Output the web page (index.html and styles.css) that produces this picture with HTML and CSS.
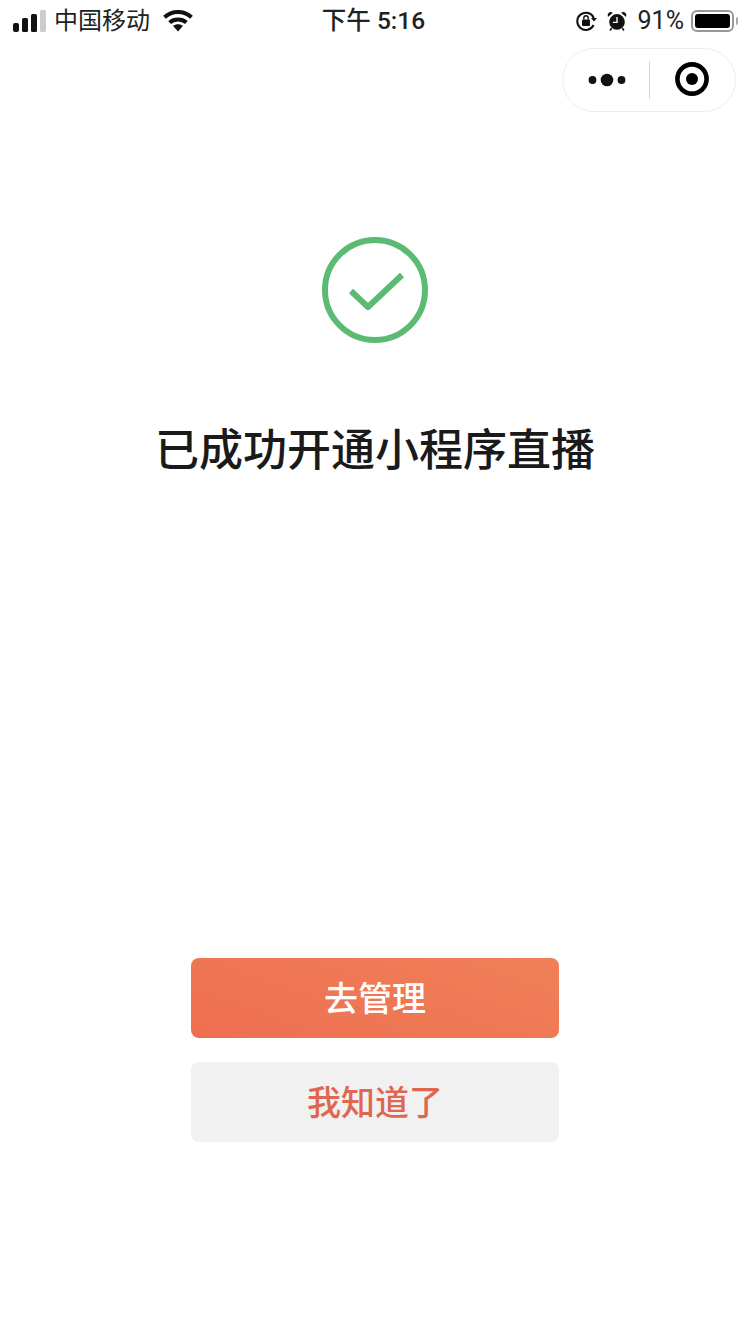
FILE: index.html
```html
<!DOCTYPE html>
<html lang="zh-CN">
<head>
    <meta charset="UTF-8">
    <meta name="viewport" content="width=device-width, initial-scale=1.0">
    <title>已成功开通小程序直播</title>
    <link rel="stylesheet" href="styles.css">
</head>
<body>
<div id="page">
    <div id="status-bar">
        <div class="status-side">
            <svg class="signal" width="34" height="22" viewBox="0 0 34 22">
                <rect x="0" y="13" width="6" height="9" rx="2" fill="#111"/>
                <rect x="9" y="8" width="6" height="14" rx="1.5" fill="#111"/>
                <rect x="18" y="4" width="6" height="18" rx="1.5" fill="#111"/>
                <rect x="27" y="0" width="6" height="22" rx="1.5" fill="#ccc"/>
            </svg>
            <span class="carrier">中国移动</span>
            <svg class="wifi" width="30" height="22" viewBox="0 0 30 22">
                <path d="M1.5 7.2C9 .2 21 .2 28.5 7.2" fill="none" stroke="#111" stroke-width="4"/>
                <path d="M6.6 12.4c4.6-4 12.2-4 16.8 0" fill="none" stroke="#111" stroke-width="4"/>
                <path d="M10 15.8c3-2.2 7-2.2 10 0L15 21.5z" fill="#111"/>
            </svg>
        </div>
        <div class="status-time">下午 5:16</div>
        <div class="status-side status-right">
            <svg class="lock" width="22" height="22" viewBox="0 0 22 22">
                <path d="M18.8 8A8.6 8.6 0 1 0 18.6 15" fill="none" stroke="#111" stroke-width="2"/>
                <path d="M16 8h6l-3 3.6z" fill="#111"/>
                <rect x="7" y="9.5" width="8" height="6.5" rx="1" fill="#111"/>
                <path d="M8.8 9.5V8a2.2 2.2 0 0 1 4.4 0v1.5" fill="none" stroke="#111" stroke-width="1.4"/>
            </svg>
            <svg class="alarm" width="20" height="20" viewBox="0 0 22 22">
                <circle cx="11" cy="12" r="8.6" fill="#111"/>
                <path d="M11 6.5v6H6.5" fill="none" stroke="#fff" stroke-width="1.5"/>
                <path d="M1 6.5 6.5 1.8 3.4.8.8 3.4zM21 6.5 15.5 1.8l3.1-1 2.6 2.6z" fill="#111"/>
                <path d="M5 19l-1.6 2.4M17 19l1.6 2.4" stroke="#111" stroke-width="1.8"/>
            </svg>
            <span class="battery-text">91%</span>
            <div class="battery">
                <div class="battery-fill"></div>
            </div>
            <div class="battery-cap"></div>
        </div>
    </div>

    <div id="nav-row">
        <div class="capsule">
            <div class="capsule-part">
                <svg class="dots" width="40" height="16" viewBox="0 0 40 16">
                    <circle cx="4.5" cy="8" r="3.9" fill="#111"/>
                    <circle cx="19" cy="8" r="6.3" fill="#111"/>
                    <circle cx="33.5" cy="8" r="3.9" fill="#111"/>
                </svg>
            </div>
            <div class="capsule-line"></div>
            <div class="capsule-part">
                <svg class="target" width="36" height="36" viewBox="0 0 36 36">
                    <circle cx="18" cy="18" r="14.6" fill="none" stroke="#000" stroke-width="4.6"/>
                    <circle cx="18" cy="18" r="6" fill="#000"/>
                </svg>
            </div>
        </div>
    </div>

    <div id="result">
        <svg class="result-icon" width="108" height="108" viewBox="0 0 108 108">
            <circle cx="54" cy="54" r="50" fill="none" stroke="#5bbb73" stroke-width="6"/>
            <path d="M30 55 47 71 81 39" fill="none" stroke="#5bbb73" stroke-width="6" stroke-linejoin="round"/>
        </svg>
        <h1 class="result-title">已成功开通小程序直播</h1>
    </div>

    <div id="actions">
        <button class="btn btn-primary">去管理</button>
        <button class="btn btn-default">我知道了</button>
    </div>
</div>
</body>
</html>
```

FILE: styles.css
```css
html, body {
    margin: 0;
    padding: 0;
    background-color: #ffffff;
}
#page {
    width: 750px;
    height: 1334px;
    overflow: hidden;
    font-family: Roboto, "Noto Sans CJK SC", sans-serif;
    color: #111;
    display: flex;
    flex-direction: column;
}
#status-bar {
    height: 42px;
    display: flex;
    align-items: center;
    justify-content: space-between;
    padding: 0 12px 0 13px;
    font-size: 24px;
}
.status-side {
    width: 230px;
    display: flex;
    align-items: center;
    line-height: 38px;
    height: 38px;
}
.status-right {
    justify-content: flex-end;
    gap: 9px;
}
.carrier {
    margin-left: 7px;
    color: #222;
}
.wifi {
    margin-left: 13px;
}
.lock {
    margin-right: 1px;
}
.status-time {
    color: #222;
    font-size: 24.5px;
    font-weight: 500;
    line-height: 38px;
    height: 38px;
    margin-right: 4px;
}
.battery-text {
    color: #222;
    font-size: 25px;
    margin-left: 2px;
}
.battery {
    box-sizing: border-box;
    width: 43px;
    height: 22px;
    border: 2px solid #999;
    border-radius: 6px;
    padding: 2px;
    margin-left: -2px;
}
.battery-fill {
    width: 35px;
    height: 14px;
    background-color: #000;
    border-radius: 3px;
}
.battery-cap {
    width: 2px;
    height: 8px;
    background-color: #aaa;
    margin-left: -7px;
    border-radius: 0 2px 2px 0;
}
#nav-row {
    display: flex;
    justify-content: flex-end;
    padding: 6px 14px 0 0;
}
.capsule {
    box-sizing: border-box;
    width: 174px;
    height: 64px;
    border: 1px solid #eeeeee;
    border-radius: 32px;
    display: flex;
    align-items: center;
}
.capsule-part {
    flex: 1;
    display: flex;
    align-items: center;
    justify-content: center;
}
.capsule-line {
    width: 1px;
    height: 38px;
    background-color: #d8d8d8;
}
.dots {
    margin-left: 4px;
}
.target {
    margin-top: -2px;
}
#result {
    display: flex;
    flex-direction: column;
    align-items: center;
    padding-top: 124px;
}
.result-icon {
    display: block;
}
.result-title {
    margin: 76px 0 0;
    font-size: 44px;
    line-height: 62px;
    font-weight: 500;
    color: #1a1a1a;
}
#actions {
    display: flex;
    flex-direction: column;
    align-items: center;
    gap: 24px;
    margin-top: 476px;
}
.btn {
    box-sizing: border-box;
    width: 368px;
    height: 80px;
    border: none;
    border-radius: 8px;
    font-family: inherit;
    font-size: 34px;
    font-weight: 500;
    padding: 0 0 4px;
}
.btn-primary {
    background: linear-gradient(200deg, #f08058, #ee6f50);
    color: #ffffff;
}
.btn-default {
    background-color: #f1f1f1;
    color: #e0674f;
}
```
